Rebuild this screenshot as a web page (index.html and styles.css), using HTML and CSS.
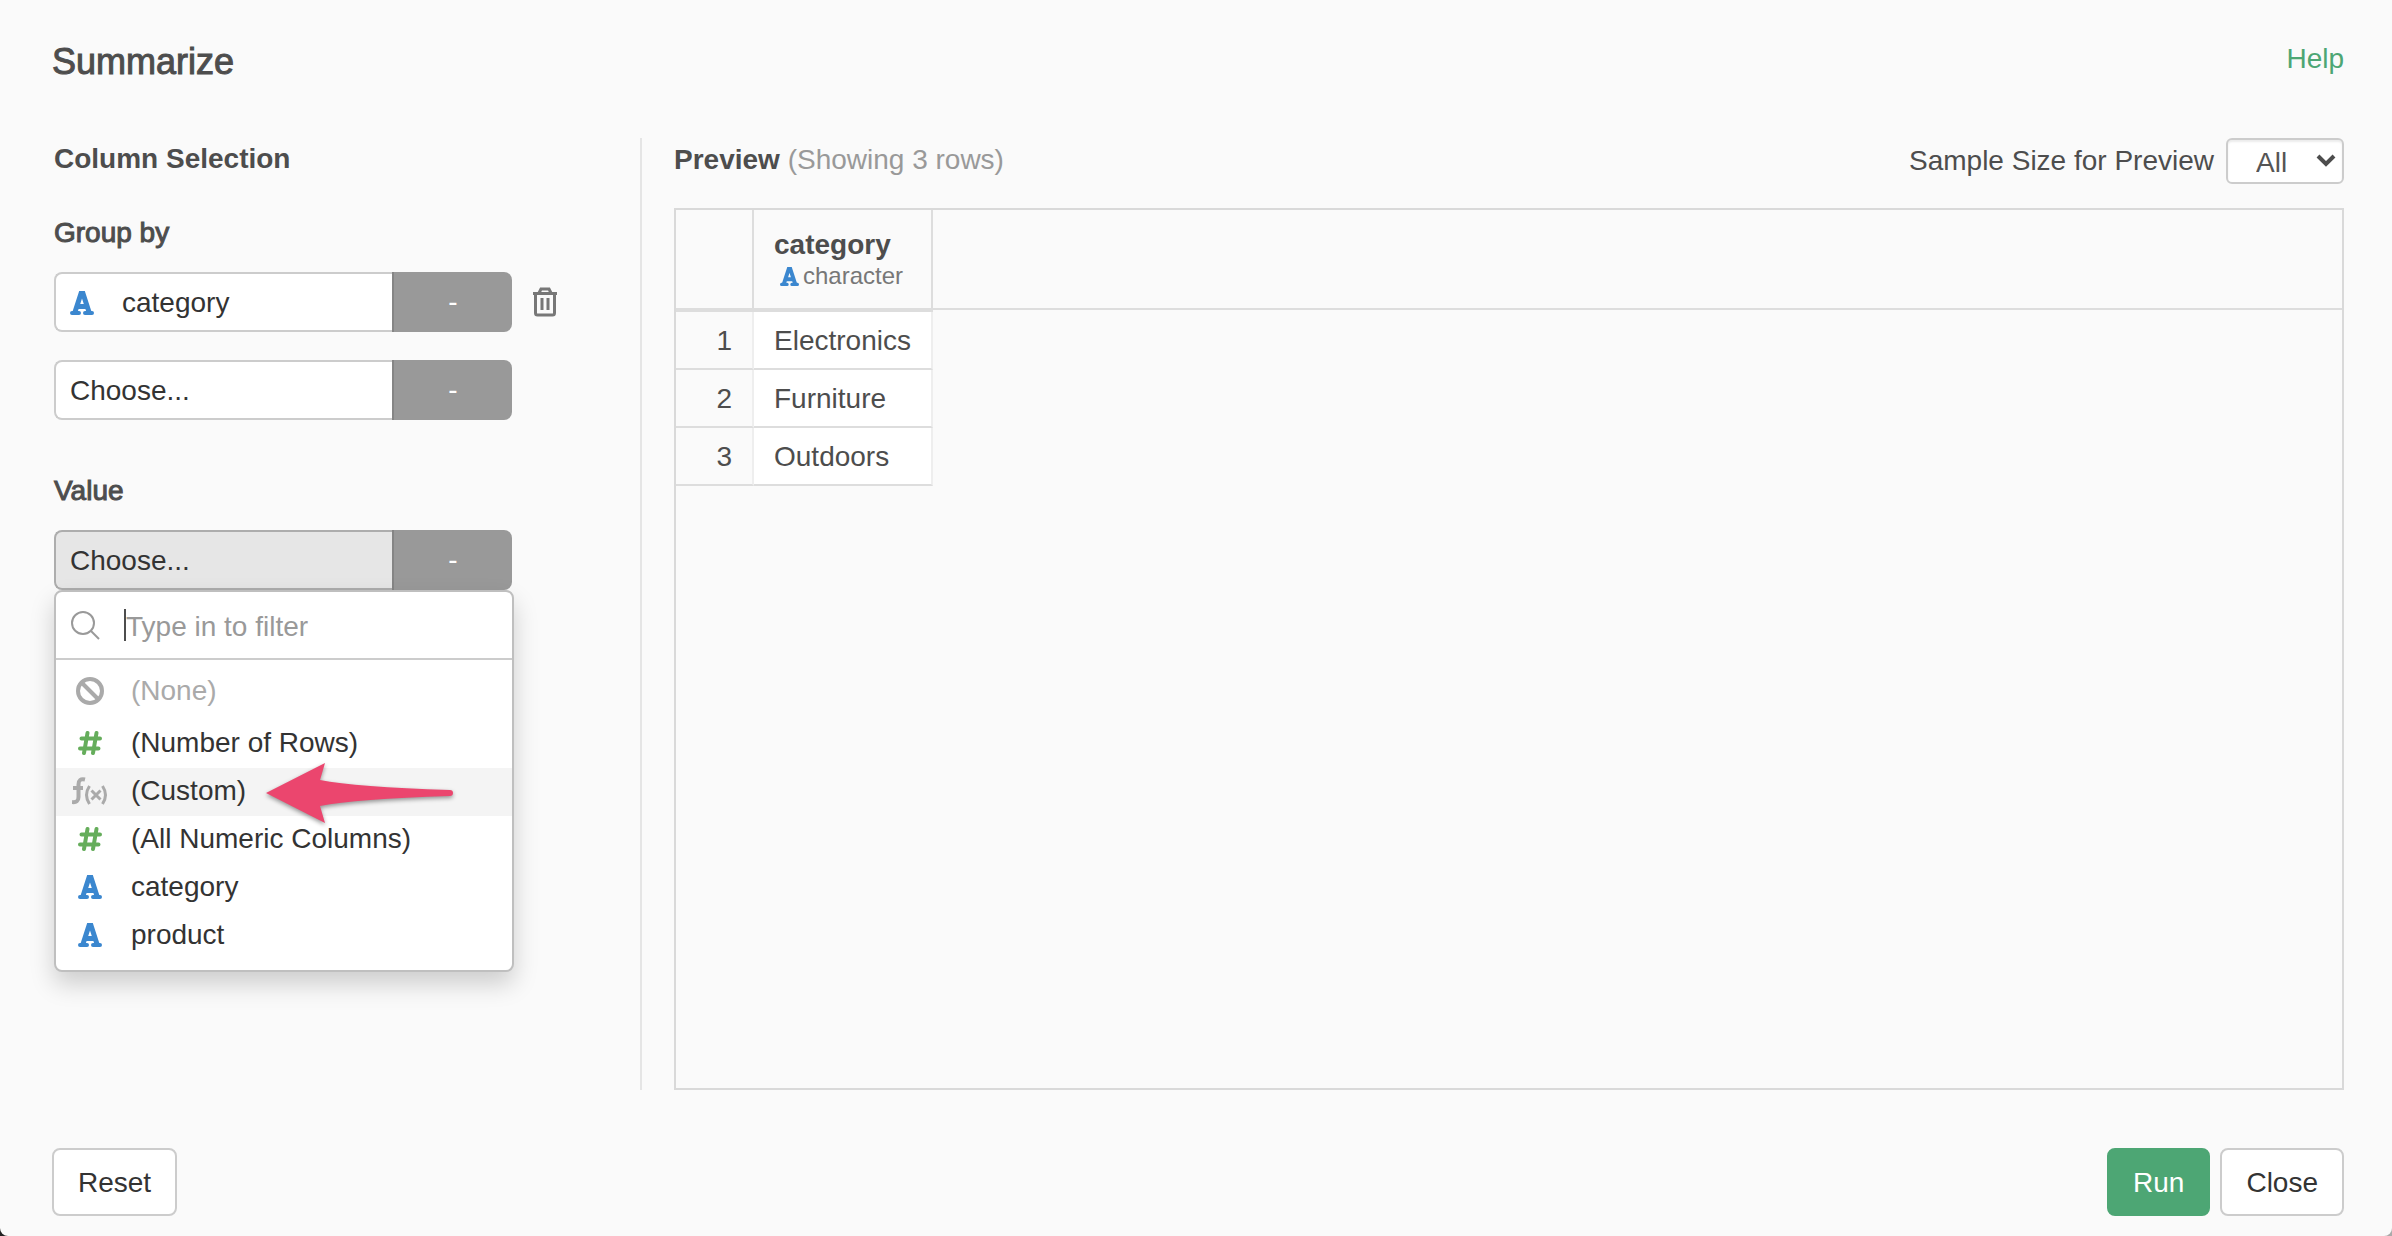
FILE: index.html
```html
<!DOCTYPE html>
<html lang="en">
<head>
    <title>Summarize</title>
    <meta charset="UTF-8">
    <meta name="viewport" content="width=device-width, initial-scale=1.0">
    <link rel="stylesheet" href="styles.css">
</head>
<body>
    <!-- shared icons -->
    <svg class="icon-defs" aria-hidden="true">
        <symbol id="icon-char" viewBox="0 0 24 24">
            <path d="M2 22h7M15 22h7" fill="none" stroke="currentColor" stroke-width="4" stroke-linecap="round"/>
            <path d="M5 21L11 2.500h2L19 21M7 15.500h10" fill="none" stroke="currentColor" stroke-width="5"/>
        </symbol>
        <symbol id="icon-hash" viewBox="0 0 24 24">
            <path d="M9.500 2L6 22M18.500 2L15 22M3.500 7.500H22M2 17.500H20.500" fill="none" stroke="currentColor" stroke-width="4" stroke-linecap="round"/>
        </symbol>
    </svg>

    <div class="dialog">
        <div class="header">
            <h1>Summarize</h1>
            <a class="help" href="#">Help</a>
        </div>

        <div class="content">
            <div class="sidebar">
                <h2>Column Selection</h2>

                <h3>Group by</h3>
                <div class="field">
                    <button type="button" class="column"><svg class="icon char"><use href="#icon-char"/></svg>category</button>
                    <button type="button" class="func">-</button>
                    <button type="button" class="delete" aria-label="Delete">
                        <svg viewBox="0 0 26 30" fill="none" stroke="currentColor">
                            <path d="M1 6.500h24" stroke-width="3"/>
                            <path d="M7 6l2-4h8l2 4M3.500 7v19q0 2 2 2h15q2 0 2-2V7" stroke-width="3"/>
                            <path d="M10 11v12M16 11v12" stroke-width="3"/>
                        </svg>
                    </button>
                </div>
                <div class="field">
                    <button type="button" class="column">Choose...</button>
                    <button type="button" class="func">-</button>
                </div>

                <h3>Value</h3>
                <div class="field open">
                    <button type="button" class="column">Choose...</button>
                    <button type="button" class="func">-</button>

                    <div class="dropdown">
                        <div class="search">
                            <svg viewBox="0 0 30 30" fill="none" stroke="currentColor" stroke-width="2">
                                <circle cx="13" cy="13" r="11"/>
                                <path d="M21 21l8 8"/>
                            </svg>
                            <span class="caret"></span>
                            <input type="text" placeholder="Type in to filter" aria-label="Filter columns">
                        </div>
                        <ul class="options">
                            <li><button type="button" class="none"><svg class="icon ban" viewBox="0 0 28 28" fill="none" stroke="currentColor" stroke-width="4"><circle cx="14" cy="14" r="12"/><path d="M6 6l16 16"/></svg>(None)</button></li>
                            <li><button type="button"><svg class="icon hash"><use href="#icon-hash"/></svg>(Number of Rows)</button></li>
                            <li class="active">
                                <button type="button"><svg class="icon fx" viewBox="0 0 36 28" fill="none" stroke="currentColor"><path d="M13 2.500Q6.500 1 6.500 7.500V20q0 6-6.500 5M1 11h10" stroke-width="4"/><path d="M17.500 9q-6 9 0 18M30.500 9q6 9 0 18" stroke-width="3"/><path d="M19.500 13.500l9 9M28.500 13.500l-9 9" stroke-width="3"/></svg>(Custom)</button>
                                <svg class="arrow" viewBox="0 0 188 62"><path d="M0 31L59 1L54 18Q90 25 184 28a3 3 0 0 1 0 6Q90 37 54 44L59 61Z"/></svg>
                            </li>
                            <li><button type="button"><svg class="icon hash"><use href="#icon-hash"/></svg>(All Numeric Columns)</button></li>
                            <li><button type="button"><svg class="icon char"><use href="#icon-char"/></svg>category</button></li>
                            <li><button type="button"><svg class="icon char"><use href="#icon-char"/></svg>product</button></li>
                        </ul>
                    </div>
                </div>
            </div>

            <div class="preview">
                <div class="preview-header">
                    <h2>Preview <span>(Showing 3 rows)</span></h2>
                    <label for="sampleSize">Sample Size for Preview</label>
                    <div class="select">
                        <select id="sampleSize">
                            <option>All</option>
                        </select>
                        <svg viewBox="0 0 20 14"><path d="M2 3l8 8l8-8" fill="none" stroke="currentColor" stroke-width="4"/></svg>
                    </div>
                </div>

                <div class="grid">
                    <div class="grid-top">
                        <table>
                            <thead>
                                <tr>
                                    <th></th>
                                    <th>
                                        <div class="name">category</div>
                                        <div class="type"><svg class="char"><use href="#icon-char"/></svg>character</div>
                                    </th>
                                </tr>
                            </thead>
                            <tbody>
                                <tr><td>1</td><td>Electronics</td></tr>
                                <tr><td>2</td><td>Furniture</td></tr>
                                <tr><td>3</td><td>Outdoors</td></tr>
                            </tbody>
                        </table>
                        <div class="header-fill"></div>
                    </div>
                </div>
            </div>
        </div>

        <div class="footer">
            <button type="button" class="btn reset">Reset</button>
            <button type="button" class="btn run">Run</button>
            <button type="button" class="btn">Close</button>
        </div>
    </div>
</body>
</html>
```
FILE: styles.css
```css
* {
    box-sizing: border-box;
}

body {
    margin: 0;
    font-family: "Helvetica Neue", "Liberation Sans", Arial, sans-serif;
    font-size: 28px;
    line-height: 32px;
    color: #4D4D4D;
    background: linear-gradient(to right, #222222, #AAAAAA);
}

button, input, select {
    font: inherit;
    color: #333333;
}

button {
    border: none;
    padding: 0;
    background: none;
    text-align: left;
    cursor: pointer;
}

h1, h2, h3 {
    margin: 0;
    font-size: 28px;
}

.icon-defs {
    position: absolute;
    width: 0;
    height: 0;
}

.dialog {
    display: flex;
    flex-direction: column;
    min-height: 100vh;
    padding: 40px 48px 20px 52px;
    background-color: #FAFAFA;
    border-radius: 0 0 8px 8px;
}

.header {
    display: flex;
    justify-content: space-between;
    margin-bottom: 54px;
}

.header h1 {
    font-size: 36px;
    line-height: 44px;
    font-weight: 500;
    -webkit-text-stroke: 1px;
}

.help {
    line-height: 38px;
    color: #4DA674;
    text-decoration: none;
}

.content {
    display: flex;
    flex: 1;
}

/* left side */

.sidebar {
    flex: 0 0 590px;
    padding-left: 2px;
    border-right: 2px solid #E5E5E5;
}

.sidebar h2 {
    margin-top: 5px;
}

.sidebar h3 {
    margin: 42px 0 23px;
    font-weight: 500;
    -webkit-text-stroke: 1px;
}

.sidebar .field + h3 {
    margin-top: 55px;
}

.field {
    display: flex;
    align-items: center;
    position: relative;
    height: 60px;
}

.field + .field {
    margin-top: 28px;
}

.column {
    display: flex;
    align-items: center;
    width: 338px;
    height: 60px;
    padding: 2px 14px 0;
    border: 2px solid #CCCCCC;
    border-right: none;
    border-radius: 8px 0 0 8px;
    background-color: #FFFFFF;
}

.column .icon {
    margin-right: 28px;
}

.func {
    width: 120px;
    height: 60px;
    border-left: 2px solid #858585;
    border-radius: 0 8px 8px 0;
    background-color: #999999;
    color: #FFFFFF;
    text-align: center;
}

.open .column {
    border-color: #ADADAD;
    background-color: #E6E6E6;
}

.delete {
    margin-left: 20px;
    color: #777777;
}

.delete svg {
    display: block;
    width: 26px;
    height: 30px;
}

.icon {
    width: 24px;
    height: 24px;
}

.char {
    color: #3B87CF;
}

.hash {
    color: #65AD5B;
}

.dropdown {
    position: absolute;
    top: 60px;
    left: 0;
    width: 460px;
    border: 2px solid #BFBFBF;
    border-radius: 8px;
    background-color: #FFFFFF;
    box-shadow: 0 12px 24px rgba(0, 0, 0, 0.18);
}

.search {
    display: flex;
    align-items: center;
    height: 68px;
    padding: 0 14px;
    border-bottom: 2px solid #CCCCCC;
    color: #999999;
}

.search svg {
    width: 30px;
    height: 30px;
    margin-right: 24px;
}

.caret {
    width: 2px;
    height: 32px;
    background-color: #4D4D4D;
}

.search input {
    flex: 1;
    min-width: 0;
    border: none;
    padding: 4px 0 0;
    outline: none;
    background: none;
}

.search input::placeholder {
    color: #999999;
    opacity: 1;
}

.options {
    margin: 0;
    padding: 8px 0 10px;
    list-style: none;
}

.options li {
    position: relative;
}

.options li:first-child {
    margin-bottom: 4px;
}

.options button {
    display: grid;
    grid-template-columns: 36px 1fr;
    column-gap: 23px;
    align-items: center;
    width: 100%;
    height: 48px;
    padding: 0 0 3px 16px;
}

.options .icon {
    justify-self: center;
}

.options .none,
.options .ban,
.options .fx {
    color: #AAAAAA;
}

.options .ban {
    width: 28px;
    height: 28px;
}

.options .fx {
    width: 36px;
    height: 28px;
}

.options .active {
    background-color: #F4F4F4;
}

.arrow {
    position: absolute;
    top: -6px;
    left: 210px;
    z-index: 1;
    width: 188px;
    height: 62px;
    fill: #EB466E;
    filter: drop-shadow(0 2px 2px rgba(0, 0, 0, 0.4));
}

/* right side */

.preview {
    display: flex;
    flex: 1;
    flex-direction: column;
    padding-left: 32px;
}

.preview-header {
    display: flex;
    align-items: center;
    gap: 12px;
    margin-bottom: 24px;
}

.preview-header h2 {
    flex: 1;
    padding-bottom: 3px;
}

.preview-header span {
    font-weight: normal;
    color: #999999;
}

.select {
    position: relative;
}

.select select {
    display: block;
    width: 118px;
    height: 46px;
    padding: 4px 0 0 28px;
    border: 2px solid #CCCCCC;
    border-radius: 6px;
    background-color: #FFFFFF;
    box-shadow: inset 0 2px 2px rgba(0, 0, 0, 0.08);
    color: #555555;
    appearance: none;
}

.select svg {
    position: absolute;
    top: 15px;
    right: 8px;
    width: 20px;
    height: 14px;
    pointer-events: none;
}

.grid {
    flex: 1;
    border: 2px solid #D9D9D9;
}

.grid-top {
    display: flex;
}

.header-fill {
    flex: 1;
    height: 100px;
    border-bottom: 2px solid #DDDDDD;
}

table {
    border-collapse: separate;
    border-spacing: 0;
}

th {
    height: 102px;
    padding: 2px 20px 0;
    border-right: 2px solid #DDDDDD;
    border-bottom: 4px solid #DDDDDD;
    text-align: left;
}

.name {
    line-height: 32px;
}

.type {
    display: flex;
    align-items: center;
    gap: 4px;
    padding-left: 6px;
    font-size: 24px;
    line-height: 30px;
    font-weight: normal;
    color: #777777;
}

.type svg {
    width: 19px;
    height: 19px;
}

td {
    height: 58px;
    padding: 2px 20px 0;
    border-right: 2px solid #EEEEEE;
    border-bottom: 2px solid #DDDDDD;
    background-color: #FFFFFF;
}

td:first-child {
    width: 78px;
    background-color: #FAFAFA;
    text-align: right;
}

/* buttons */

.footer {
    display: flex;
    gap: 10px;
    margin-top: 58px;
}

.btn {
    height: 68px;
    padding: 2px 24px 0;
    border: 2px solid #CCCCCC;
    border-radius: 8px;
    background-color: #FFFFFF;
}

.reset {
    margin-right: auto;
}

.run {
    border-color: #4DA674;
    background-color: #4DA674;
    color: #FFFFFF;
}
```
